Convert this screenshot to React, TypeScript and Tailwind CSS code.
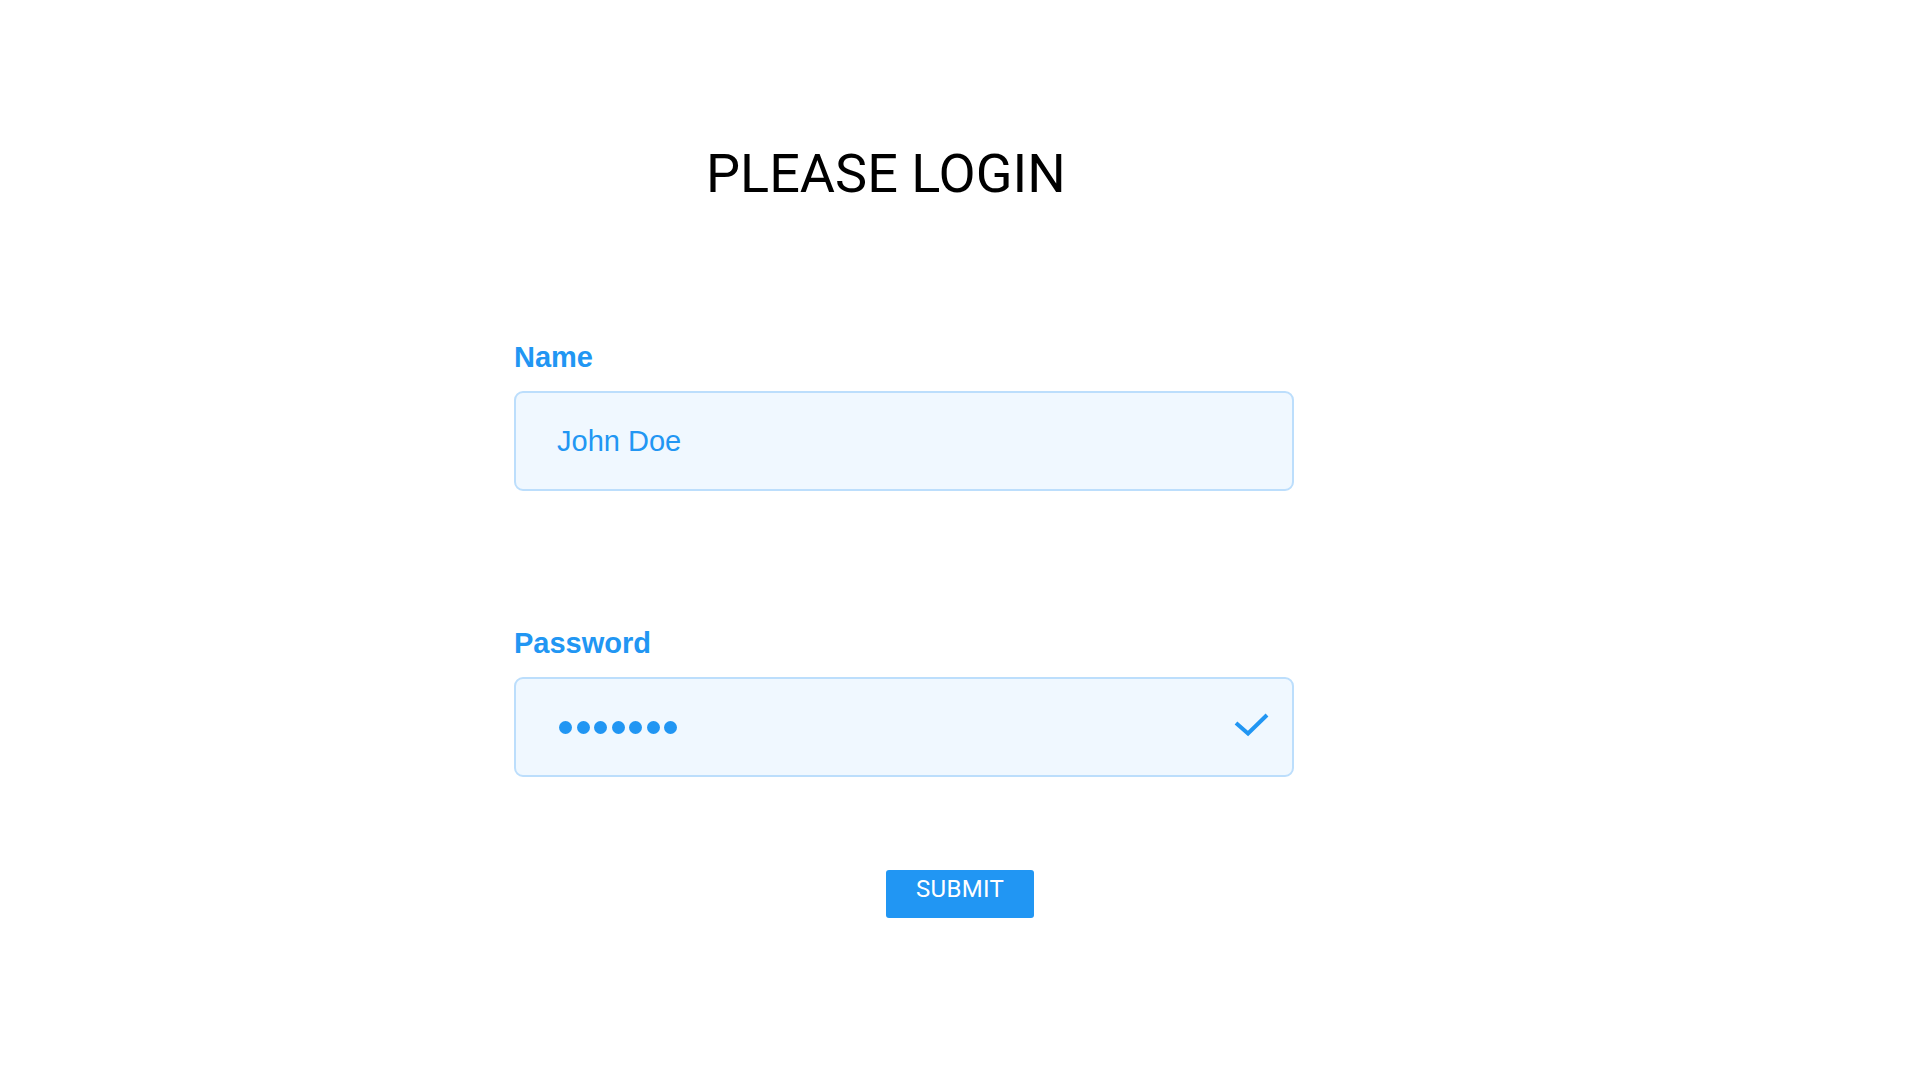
export default function App() {
	return (
		<div className="min-h-screen w-full bg-white flex flex-col">
			<h1 className="pl-[706px] pt-[147px] text-[54px] leading-none font-normal text-black font-['Roboto',sans-serif]">
				PLEASE LOGIN
			</h1>
			<form className="ml-[514px] w-[780px] mt-[142px] flex flex-col">
				<label className="text-[29px] leading-none font-bold text-[#2196f3] font-['Liberation_Sans',Arial,sans-serif]">
					Name
				</label>
				<div className="mt-[19px] h-[100px] rounded-[9px] border-2 border-[#bcdefc] bg-[#f0f8ff] flex items-center pl-[41px]">
					<span className="text-[29px] leading-none text-[#2196f3] font-['Liberation_Sans',Arial,sans-serif]">
						John Doe
					</span>
				</div>

				<label className="mt-[138px] text-[29px] leading-none font-bold text-[#2196f3] font-['Liberation_Sans',Arial,sans-serif]">
					Password
				</label>
				<div className="mt-[19px] h-[100px] rounded-[9px] border-2 border-[#bcdefc] bg-[#f0f8ff] flex items-center justify-between pl-[43px] pr-[22px]">
					<div className="flex items-center gap-[4.5px] pt-[1px]">
						{[0, 1, 2, 3, 4, 5, 6].map((i) => (
							<span key={i} className="w-[13px] h-[13px] rounded-full bg-[#2196f3]" />
						))}
					</div>
					<svg width="37" height="25" viewBox="0 0 37 25" fill="none" className="-mt-[6px]">
						<polyline
							points="3,11 15,21.5 34,3"
							stroke="#2196f3"
							strokeWidth="4"
							strokeLinecap="butt"
							strokeLinejoin="miter"
						/>
					</svg>
				</div>
			</form>
			<div className="flex justify-center mt-[93px]">
				<button
					type="button"
					className="w-[148px] h-[48px] pt-[7px] flex justify-center items-start rounded-[3px] bg-[#2196f3] text-white text-[24px] leading-none tracking-[0.3px] font-['Roboto',sans-serif]"
				>
					SUBMIT
				</button>
			</div>
		</div>
	);
}
